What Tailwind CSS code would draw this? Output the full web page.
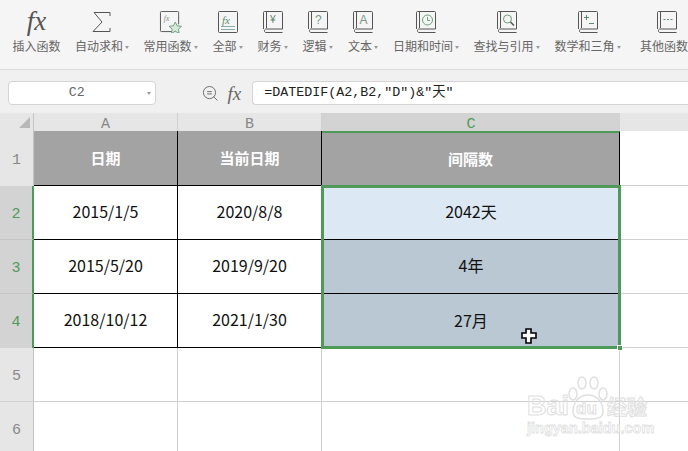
<!DOCTYPE html>
<html lang="zh-CN">
<head>
<meta charset="UTF-8">
<title>WPS 表格</title>
<script src="https://cdn.jsdelivr.net/npm/@tailwindcss/browser@4"></script>
</head>
<body class="w-[688px] h-[451px] overflow-hidden bg-white font-['Noto_Sans_CJK_SC','Noto_Sans',sans-serif] text-[#111]">
<div class="relative w-[688px] h-[451px] overflow-hidden">

  <!-- toolbar -->
  <div class="h-[70px] bg-[#f5f5f5] border-b border-[#dcdcdc] flex items-start gap-[14px] pl-[12px] text-[12px] leading-4 text-[#666] whitespace-nowrap">
    <div class="w-[49px] shrink-0 flex flex-col items-center">
      <div class="h-[38px] pt-[8px] font-['Liberation_Serif',serif] italic text-[27px] leading-[27px] text-[#555]">fx</div>
      <span>插入函数</span>
    </div>
    <div class="w-[54px] shrink-0 flex flex-col items-center">
      <svg class="mt-[11px] h-[22px] w-[20px] mb-[5px]" viewBox="0 0 20 22" fill="none" stroke="#555" stroke-width="1"><path d="M18 5V1.500H2l8 9.500-9 9.500h17V17"/></svg>
      <span>自动求和<i class="inline-block ml-[2px] mb-[2px] border-x-[2.5px] border-t-[3px] border-x-transparent border-t-[#999]"></i></span>
    </div>
    <div class="w-[55px] shrink-0 flex flex-col items-center">
      <svg class="mt-[11px] h-[22px] w-[23px] mb-[5px]" viewBox="0 0 24 23" fill="none"><path d="M17 21.500H2.500a1 1 0 0 1-1-1v-19a1 1 0 0 1 1-1h17a1 1 0 0 1 1 1V14" stroke="#555"/><text x="5" y="10" font-size="8" font-style="italic" font-family="Liberation Serif" fill="#8a8a8a">fx</text><path d="M17 11.500l2 4 4.500.5-3.300 3 1 4.500-4.200-2.300-4.200 2.300 1-4.500-3.300-3 4.500-.5z" fill="#d6e8da" stroke="#6c9f7a"/></svg>
      <span>常用函数<i class="inline-block ml-[2px] mb-[2px] border-x-[2.5px] border-t-[3px] border-x-transparent border-t-[#999]"></i></span>
    </div>
    <div class="w-[31px] shrink-0 flex flex-col items-center">
      <svg class="mt-[11px] h-[22px] w-[20px] mb-[5px]" viewBox="0 0 20 22" fill="none"><rect x=".5" y=".5" width="19" height="21" rx="1" stroke="#555"/><text x="4" y="13" font-size="11" font-style="italic" font-family="Liberation Serif" fill="#5d8a6c">fx</text><path d="M3 15.500h14M3 18.500h14" stroke="#8aa"/></svg>
      <span>全部<i class="inline-block ml-[2px] mb-[2px] border-x-[2.5px] border-t-[3px] border-x-transparent border-t-[#999]"></i></span>
    </div>
    <div class="w-[31px] shrink-0 flex flex-col items-center">
      <svg class="mt-[11px] h-[22px] w-[20px] mb-[5px]" viewBox="0 0 20 22" fill="none"><path d="M.5 18V1.500a1 1 0 0 1 1-1h17a1 1 0 0 1 1 1V18h-17a2 2 0 0 0 0 3.500h17M3.500 1v16" stroke="#555"/><text x="7" y="12" font-size="10" font-family="Liberation Sans" fill="#5d8a6c">¥</text></svg>
      <span>财务<i class="inline-block ml-[2px] mb-[2px] border-x-[2.5px] border-t-[3px] border-x-transparent border-t-[#999]"></i></span>
    </div>
    <div class="w-[31px] shrink-0 flex flex-col items-center">
      <svg class="mt-[11px] h-[22px] w-[20px] mb-[5px]" viewBox="0 0 20 22" fill="none"><path d="M.5 18V1.500a1 1 0 0 1 1-1h17a1 1 0 0 1 1 1V18h-17a2 2 0 0 0 0 3.500h17M3.500 1v16" stroke="#555"/><text x="7" y="13" font-size="12" font-family="Liberation Sans" fill="#7a9a86">?</text></svg>
      <span>逻辑<i class="inline-block ml-[2px] mb-[2px] border-x-[2.5px] border-t-[3px] border-x-transparent border-t-[#999]"></i></span>
    </div>
    <div class="w-[32px] shrink-0 flex flex-col items-center">
      <svg class="mt-[11px] h-[22px] w-[20px] mb-[5px]" viewBox="0 0 20 22" fill="none"><path d="M.5 18V1.500a1 1 0 0 1 1-1h17a1 1 0 0 1 1 1V18h-17a2 2 0 0 0 0 3.500h17M3.500 1v16" stroke="#555"/><text x="6.500" y="13" font-size="12" font-family="Liberation Sans" fill="#7a9a86">A</text></svg>
      <span>文本<i class="inline-block ml-[2px] mb-[2px] border-x-[2.5px] border-t-[3px] border-x-transparent border-t-[#999]"></i></span>
    </div>
    <div class="w-[66px] shrink-0 flex flex-col items-center">
      <svg class="mt-[11px] h-[22px] w-[20px] mb-[5px]" viewBox="0 0 20 22" fill="none"><path d="M.5 18V1.500a1 1 0 0 1 1-1h17a1 1 0 0 1 1 1V18h-17a2 2 0 0 0 0 3.500h17M3.500 1v16" stroke="#555"/><circle cx="11.500" cy="9" r="5" stroke="#6c9f7a"/><path d="M11.500 6v3.500H14" stroke="#6c9f7a"/></svg>
      <span>日期和时间<i class="inline-block ml-[2px] mb-[2px] border-x-[2.5px] border-t-[3px] border-x-transparent border-t-[#999]"></i></span>
    </div>
    <div class="w-[67px] shrink-0 flex flex-col items-center">
      <svg class="mt-[11px] h-[22px] w-[20px] mb-[5px]" viewBox="0 0 20 22" fill="none"><path d="M.5 18V1.500a1 1 0 0 1 1-1h17a1 1 0 0 1 1 1V18h-17a2 2 0 0 0 0 3.500h17M3.500 1v16" stroke="#555"/><circle cx="10.500" cy="8" r="4" stroke="#6c9f7a"/><path d="M13.500 11l3.500 3.500" stroke="#555" stroke-width="1.500"/></svg>
      <span>查找与引用<i class="inline-block ml-[2px] mb-[2px] border-x-[2.5px] border-t-[3px] border-x-transparent border-t-[#999]"></i></span>
    </div>
    <div class="w-[67px] shrink-0 flex flex-col items-center">
      <svg class="mt-[11px] h-[22px] w-[20px] mb-[5px]" viewBox="0 0 20 22" fill="none"><path d="M.5 18V1.500a1 1 0 0 1 1-1h17a1 1 0 0 1 1 1V18h-17a2 2 0 0 0 0 3.500h17M3.500 1v16" stroke="#555"/><path d="M6 6.500h5M8.500 4v5M11 12.500h5" stroke="#5d8a6c"/></svg>
      <span>数学和三角<i class="inline-block ml-[2px] mb-[2px] border-x-[2.5px] border-t-[3px] border-x-transparent border-t-[#999]"></i></span>
    </div>
    <div class="w-[64px] shrink-0 flex flex-col items-center">
      <svg class="mt-[11px] h-[22px] w-[20px] mb-[5px]" viewBox="0 0 20 22" fill="none"><path d="M.5 18V1.500a1 1 0 0 1 1-1h17a1 1 0 0 1 1 1V18h-17a2 2 0 0 0 0 3.500h17M3.500 1v16" stroke="#555"/><path d="M6.500 8.500h2M10 8.500h2M13.500 8.500h2" stroke="#5d8a6c"/></svg>
      <span>其他函数<i class="inline-block ml-[2px] mb-[2px] border-x-[2.5px] border-t-[3px] border-x-transparent border-t-[#999]"></i></span>
    </div>
  </div>

  <!-- formula bar -->
  <div class="h-[43px] bg-[#f0f0f0] flex items-center pl-[8px] pt-[3px]">
    <div class="w-[149px] h-[24px] bg-white border border-[#d4d4d4] rounded-[4px] flex items-center relative pr-[10px]">
      <span class="flex-1 text-center font-['Liberation_Mono',monospace] text-[13.330px] text-[#666]">C2</span>
      <i class="absolute right-[4px] top-[10px] border-x-[2.5px] border-t-[3px] border-x-transparent border-t-[#999]"></i>
    </div>
    <svg class="ml-[46px] h-[17px] w-[17px]" viewBox="0 0 18 18" fill="none" stroke="#666"><circle cx="8" cy="8" r="6.500"/><path d="M5.500 7h5M5.500 9.500h5M12.500 12.500l4 4"/></svg>
    <span class="ml-[9px] w-[25px] font-['Liberation_Serif',serif] italic text-[19px] leading-none text-[#666]">fx</span>
    <div class="w-[440px] h-[24px] bg-white border-y border-l border-[#d4d4d4] rounded-l-[4px] pl-[11px] flex items-center font-['Liberation_Mono','Noto_Sans_CJK_SC',monospace] text-[13.330px] text-[#222] whitespace-nowrap">=DATEDIF(A2,B2,"D")&amp;"天"</div>
  </div>

  <!-- sheet -->
  <div class="grid grid-cols-[34px_144px_144px_298px_68px] grid-rows-[18px_55px_54px_54px_54px_54px_54px] text-[16px]">
    <!-- column headers -->
    <div class="bg-[#e6e6e6] border-r border-[#c4c4c4] flex items-end justify-end p-[3px]"><i class="border-l-[11px] border-b-[11px] border-l-transparent border-b-[#b8b8b8]"></i></div>
    <div class="bg-[#e6e6e6] border-r border-[#d0d0d0] flex items-center justify-center pt-[6px] font-['Liberation_Mono',monospace] text-[15px] text-[#888]">A</div>
    <div class="bg-[#e6e6e6] border-r border-[#d0d0d0] flex items-center justify-center pt-[6px] font-['Liberation_Mono',monospace] text-[15px] text-[#888]">B</div>
    <div class="bg-[#d3d3d3] flex items-center justify-center pt-[6px] font-['Liberation_Mono',monospace] text-[15px] text-[#4f9a58]">C</div>
    <div class="bg-[#e6e6e6]"></div>

    <!-- row 1 -->
    <div class="bg-[#e6e6e6] border-r border-[#c4c4c4] flex items-center justify-center pt-[5px] font-['Liberation_Mono',monospace] text-[15px] text-[#888]">1</div>
    <div class="bg-[#a3a3a3] border-r border-b border-black flex items-center justify-center text-white font-bold text-[15px]">日期</div>
    <div class="bg-[#a3a3a3] border-r border-b border-black flex items-center justify-center text-white font-bold text-[15px]">当前日期</div>
    <div class="bg-[#a3a3a3] border-r border-black border-t-2 border-t-[#4f9a58] flex items-center justify-center text-white font-bold text-[15px]">间隔数</div>
    <div class="border-b border-[#d0d0d0]"></div>

    <!-- row 2 -->
    <div class="bg-[#d3d3d3] border-r-2 border-[#4f9a58] border-b border-b-[#c4c4c4] flex items-center justify-center pt-[5px] font-['Liberation_Mono',monospace] text-[15px] text-[#4f9a58]">2</div>
    <div class="border-r border-b border-black flex items-center justify-center pb-[3px]">2015/1/5</div>
    <div class="border-r border-b border-black flex items-center justify-center pb-[3px]">2020/8/8</div>
    <div class="bg-[#dce9f4] border-b border-black flex items-center justify-center pb-[3px]">2042天</div>
    <div class="border-b border-[#d0d0d0]"></div>

    <!-- row 3 -->
    <div class="bg-[#d3d3d3] border-r-2 border-[#4f9a58] border-b border-b-[#c4c4c4] flex items-center justify-center pt-[5px] font-['Liberation_Mono',monospace] text-[15px] text-[#4f9a58]">3</div>
    <div class="border-r border-b border-black flex items-center justify-center pb-[3px]">2015/5/20</div>
    <div class="border-r border-b border-black flex items-center justify-center pb-[3px]">2019/9/20</div>
    <div class="bg-[#bac8d3] border-b border-black flex items-center justify-center pb-[3px]">4年</div>
    <div class="border-b border-[#d0d0d0]"></div>

    <!-- row 4 -->
    <div class="bg-[#d3d3d3] border-r-2 border-[#4f9a58] flex items-center justify-center pt-[5px] font-['Liberation_Mono',monospace] text-[15px] text-[#4f9a58]">4</div>
    <div class="border-r border-b border-black flex items-center justify-center pb-[3px]">2018/10/12</div>
    <div class="border-r border-b border-black flex items-center justify-center pb-[3px]">2021/1/30</div>
    <div class="bg-[#bac8d3] flex items-center justify-center pb-[3px]">27月</div>
    <div class="border-b border-[#d0d0d0]"></div>

    <!-- row 5, 6 -->
    <div class="bg-[#e6e6e6] border-r border-[#c4c4c4] border-b border-b-[#d0d0d0] flex items-center justify-center pt-[5px] font-['Liberation_Mono',monospace] text-[15px] text-[#888]">5</div>
    <div class="border-r border-b border-[#d0d0d0]"></div>
    <div class="border-r border-b border-[#d0d0d0]"></div>
    <div class="border-r border-b border-[#d0d0d0]"></div>
    <div class="border-b border-[#d0d0d0]"></div>

    <div class="bg-[#e6e6e6] border-r border-[#c4c4c4] flex items-center justify-center pt-[5px] font-['Liberation_Mono',monospace] text-[15px] text-[#888]">6</div>
    <div class="border-r border-[#d0d0d0]"></div>
    <div class="border-r border-[#d0d0d0]"></div>
    <div class="border-r border-[#d0d0d0]"></div>
    <div></div>
  </div>

  <!-- selection frame -->
  <div class="absolute left-[321px] top-[185px] w-[300px] h-[164px] border-[3px] border-[#4f9a58]"></div>
  <div class="absolute left-[617px] top-[345px] w-[6px] h-[6px] bg-[#4f9a58] border border-white"></div>

  <!-- cursor -->
  <svg class="absolute left-[521px] top-[328px]" width="16" height="16" viewBox="0 0 16 16"><path d="M5 1h5v4h5v5h-5v5H5v-5H1V5h4z" fill="#fff" stroke="#000" stroke-width="1.600"/></svg>

  <!-- watermark -->
  <div class="absolute left-[527px] top-[376px] w-[125px] h-[72px]">
    <svg class="absolute left-[40px] top-0" width="42" height="44" viewBox="0 0 42 44" fill="none" stroke="#e0e0e0" stroke-width="1.500"><ellipse cx="6" cy="18" rx="4" ry="6"/><ellipse cx="15" cy="7" rx="4" ry="6"/><ellipse cx="27" cy="7" rx="4" ry="6"/><ellipse cx="36" cy="18" rx="4" ry="6"/><path d="M6 36c0-12 8-17 15-17s15 5 15 17c0 6-6 7-15 7S6 42 6 36z"/></svg>
    <span class="absolute left-0 top-[17px] font-['Liberation_Sans',sans-serif] font-bold text-[27px] leading-none text-transparent [-webkit-text-stroke:1px_#e0e0e0]">Bai</span>
    <span class="absolute left-[49px] top-[24px] font-['Liberation_Sans',sans-serif] font-bold text-[17px] leading-none text-transparent [-webkit-text-stroke:1px_#e0e0e0]">du</span>
    <span class="absolute left-[80px] top-[21px] text-[20px] leading-none font-bold text-transparent [-webkit-text-stroke:1px_#e0e0e0]">经验</span>
    <span class="absolute left-0 top-[45px] font-['Liberation_Sans',sans-serif] font-bold text-[14.500px] leading-none text-transparent [-webkit-text-stroke:.8px_#e0e0e0] whitespace-nowrap">jingyan.baidu.com</span>
  </div>
</div>
</body>
</html>
